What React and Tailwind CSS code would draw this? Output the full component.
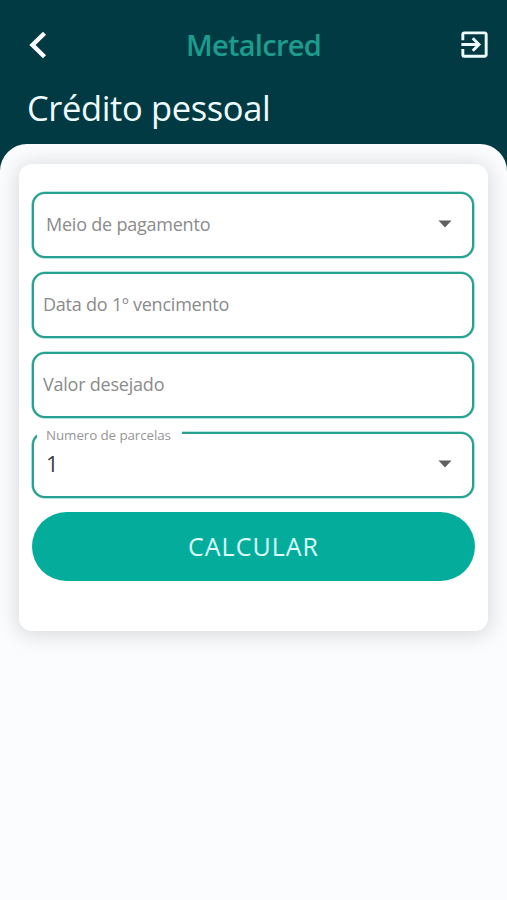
import { MdExitToApp } from "react-icons/md";

const fields = [
  { label: "Meio de pagamento", select: true },
  { label: "Data do 1º vencimento" },
  { label: "Valor desejado" },
  { label: "Numero de parcelas", value: "1", select: true },
];

function Caret() {
  return (
    <svg width="14" height="8" viewBox="0 0 14 8" className="mb-[2px] shrink-0">
      <path d="M0.5 0.5h13L7 7.5z" fill="#5f5f5f" />
    </svg>
  );
}

function Field({ label, value, select }) {
  return (
    <div
      className={`relative flex h-[66px] items-center justify-between rounded-[13px] border-2 border-[#26a090] bg-white pr-[20px] shadow-[0_0_0_0.6px_#6fcabd] ${
        select ? "pl-[12px]" : "pl-[9px]"
      }`}
    >
      {value ? (
        <>
          {/* Label flotante sobre el borde */}
          <span className="absolute -top-[5px] left-[3px] flex h-[11px] w-[145px] items-center bg-white pl-[9px] text-[13.4px] tracking-[-0.1px] whitespace-nowrap text-[#969696]">
            {label}
          </span>
          <span className="mt-[-3px] text-[22px] text-[#3c3c3c]">{value}</span>
        </>
      ) : (
        <span className="text-[18px] tracking-[-0.22px] text-[#8b8b8b]">{label}</span>
      )}
      {select && <Caret />}
    </div>
  );
}

export default function App() {
  return (
    <div className="h-[900px] w-[507px] overflow-hidden bg-[#013a43] font-['Open_Sans','Noto_Sans',sans-serif]">
      {/* Header */}
      <header className="h-[144px]">
        <div className="grid h-[89px] grid-cols-[1fr_auto_1fr] items-center pr-[15px] pl-[15px]">
          <button aria-label="Voltar" className="pl-[14px]">
            <svg width="18" height="28" viewBox="0 0 18 28" fill="none">
              <path d="M15.5 2.2L3.5 14l12 11.8" stroke="#fff" strokeWidth="4.4" />
            </svg>
          </button>
          <span className="pt-px text-[29px] font-semibold tracking-[-0.7px] text-[#1c9c8d]">Metalcred</span>
          <button aria-label="Sair" className="justify-self-end">
            <MdExitToApp size={35} color="#eefbfc" />
          </button>
        </div>
        <h1 className="pt-px pl-[27px] text-[34.5px] leading-[36px] tracking-[-0.38px] text-[#eefcff]">
          Crédito pessoal
        </h1>
      </header>

      {/* Contenido */}
      <main className="h-[756px] rounded-t-[27px] bg-[#fbfcfe] px-[19px] pt-[19.5px]">
        <div className="h-[467px] rounded-[13px] bg-white pt-[28px] pr-[14px] pl-[13px] shadow-[0_2px_20px_3px_rgba(0,0,0,0.13)]">
          <form className="flex flex-col gap-[14.2px]" onSubmit={(e) => e.preventDefault()}>
            {fields.map((f) => (
              <Field key={f.label} {...f} />
            ))}
            <button className="-mr-px h-[69px] rounded-full bg-[#04ad9b] text-[25px] tracking-[1px] text-[#dcfffb]">
              CALCULAR
            </button>
          </form>
        </div>
      </main>
    </div>
  );
}
